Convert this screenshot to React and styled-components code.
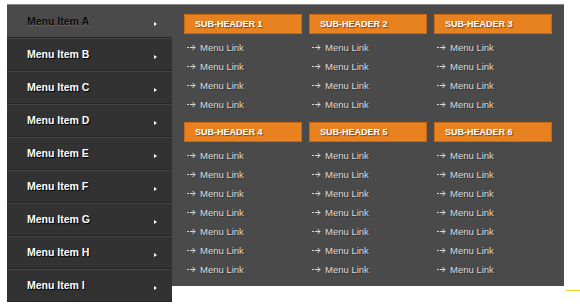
import styled, { createGlobalStyle } from "styled-components";

const GlobalStyle = createGlobalStyle`
  body {
    margin: 0;
    background: #fff;
    font-family: "Liberation Sans", Arial, sans-serif;
  }
`;

const items = ["A", "B", "C", "D", "E", "F", "G", "H", "I"];

const groups = [
  { title: "SUB-HEADER 1", links: 4 },
  { title: "SUB-HEADER 2", links: 4 },
  { title: "SUB-HEADER 3", links: 4 },
  { title: "SUB-HEADER 4", links: 7 },
  { title: "SUB-HEADER 5", links: 7 },
  { title: "SUB-HEADER 6", links: 7 },
];

const Arrow = () => (
  <svg width="9" height="7" viewBox="0 0 9 7">
    <path d="M0 3.5h2M3 3.5h5" stroke="#d8d8d8" strokeWidth="1" fill="none" />
    <path d="M5.5 1l2.5 2.5-2.5 2.5" stroke="#d8d8d8" strokeWidth="1" fill="none" />
  </svg>
);

export default function App() {
  return (
    <Page>
      <GlobalStyle />
      <MegaMenu>
        <Sidebar>
          {items.map((l, i) => (
            <MenuItem key={l} $active={i === 0}>
              <span>Menu Item {l}</span>
              <Caret />
            </MenuItem>
          ))}
        </Sidebar>
        <Content>
          {groups.map((g) => (
            <Column key={g.title}>
              <SubHeader>{g.title}</SubHeader>
              {Array.from({ length: g.links }).map((_, i) => (
                <LinkRow key={i}>
                  <Arrow />
                  <span>Menu Link</span>
                </LinkRow>
              ))}
            </Column>
          ))}
        </Content>
        <Accent />
      </MegaMenu>
    </Page>
  );
}

const Page = styled.div`
  padding: 4px 0 7px 7px;
  min-height: 308px;
  box-sizing: border-box;
`;

const MegaMenu = styled.div`
  position: relative;
  display: flex;
  align-items: flex-start;
  width: 557px;
  border-top: 1px solid #8a8a8a;
`;

const Sidebar = styled.div`
  display: flex;
  flex-direction: column;
  width: 165px;
  flex-shrink: 0;
`;

const MenuItem = styled.div`
  display: flex;
  align-items: center;
  justify-content: space-between;
  height: 33px;
  box-sizing: border-box;
  padding: 0 15px 0 20px;
  background: ${(p) => (p.$active ? "#4a4a4a" : "#323232")};
  border-bottom: 1px solid #262626;
  border-top: 1px solid ${(p) => (p.$active ? "#4a4a4a" : "#444")};
  color: ${(p) => (p.$active ? "#0a0a0a" : "#fff")};
  font-size: 10.5px;
  font-weight: bold;
  text-shadow: ${(p) =>
    p.$active ? "0 1px 1px rgba(255,255,255,0.2)" : "1px 1px 1px #000"};
  span {
    margin-top: -2px;
  }
`;

const Caret = styled.i`
  width: 0;
  height: 0;
  margin-top: 4px;
  border-left: 3px solid #fff;
  border-top: 2.5px solid transparent;
  border-bottom: 2.5px solid transparent;
`;

const Content = styled.div`
  flex: 1;
  height: 281px;
  box-sizing: border-box;
  background: #4a4a4a;
  display: grid;
  grid-template-columns: repeat(3, 118px);
  grid-auto-rows: min-content;
  column-gap: 7px;
  row-gap: 8px;
  padding: 9px 0 0 12px;
  align-content: start;
`;

const Column = styled.div`
  display: flex;
  flex-direction: column;
`;

const SubHeader = styled.div`
  height: 20px;
  box-sizing: border-box;
  display: flex;
  align-items: center;
  padding-left: 10px;
  background: #e8811f;
  border: 1px solid #c96a12;
  color: #fff;
  font-size: 9px;
  font-weight: bold;
  text-shadow: 1px 1px 1px rgba(0, 0, 0, 0.45);
  margin-bottom: 4px;
`;

const LinkRow = styled.div`
  display: flex;
  align-items: center;
  gap: 4px;
  height: 19px;
  padding-left: 3px;
  color: #dcdcdc;
  font-size: 9.5px;
  text-shadow: 1px 1px 0 rgba(0, 0, 0, 0.35);
`;

const Accent = styled.i`
  position: absolute;
  left: 559px;
  top: 285px;
  width: 14px;
  height: 1px;
  background: #f2d21c;
`;
